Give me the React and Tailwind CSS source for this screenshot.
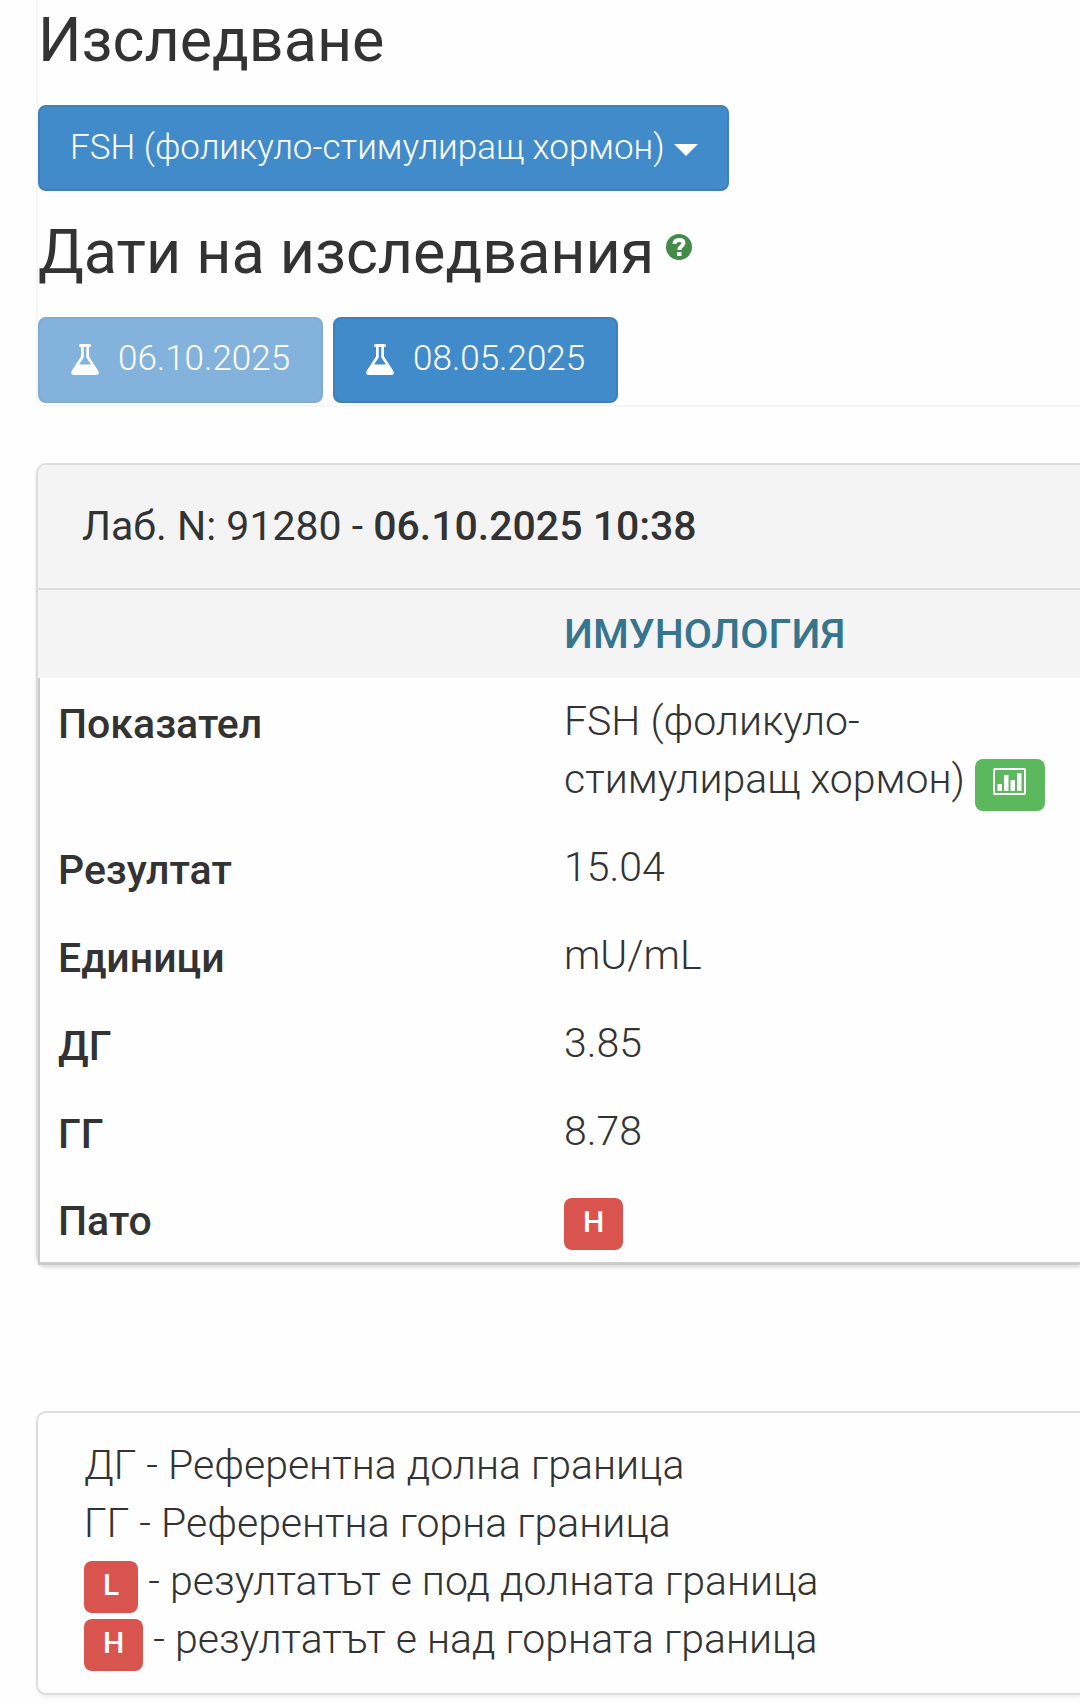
import React, { useState } from 'react';

const tests = ['FSH (фоликуло-стимулиращ хормон)'];
const dates = ['06.10.2025', '08.05.2025'];

function FlaskIcon() {
  return (
    <svg viewBox="0 0 28 31" className="h-[31px] w-[28px] shrink-0" fill="currentColor" aria-hidden="true">
      <path
        fillRule="evenodd"
        d="M9.500 0h9a1.500 1.500 0 0 1 0 3H18v9.500l9.300 14.500c1.100 2.200.2 4-2.300 4H3c-2.500 0-3.400-1.800-2.300-4L10 12.500V3h-.5a1.500 1.500 0 0 1 0-3zM12.700 3v10.500L8 20.500h12l-4.700-7V3z"
      />
    </svg>
  );
}

function HelpIcon() {
  return (
    <svg viewBox="0 0 26 26" className="h-[26px] w-[26px]" aria-hidden="true">
      <circle cx="13" cy="13" r="13" fill="#448a48" />
      <path d="M8.500 10C8.500 7 10.400 5.900 13.200 5.900s4.300 1.300 4.300 3.300c0 2.800-4.200 3-4.200 6.800" fill="none" stroke="#fff" strokeWidth="4" />
      <rect x="11" y="18" width="4.500" height="4" fill="#fff" />
    </svg>
  );
}

function StatsIcon() {
  return (
    <svg viewBox="0 0 33 27" className="h-[27px] w-[33px]" fill="#fff" aria-hidden="true">
      <rect x="1" y="1" width="31" height="25" rx="1" fill="none" stroke="#fff" strokeWidth="2" />
      <rect x="4.500" y="16" width="4.500" height="7" />
      <rect x="11" y="7" width="4.500" height="16" />
      <rect x="17.500" y="12" width="4.500" height="11" />
      <rect x="24" y="5" width="4.500" height="18" />
    </svg>
  );
}

function Flag({ children }) {
  return (
    <span className="-my-2 inline-block h-[52px] rounded-[8px] bg-[#d9534f] px-[19px] text-[30px] font-medium leading-[48px] text-white">
      {children}
    </span>
  );
}

export default function App() {
  const [test, setTest] = useState(tests[0]);
  const [active, setActive] = useState(dates[0]);

  const rows = [
    { label: 'Резултат', value: '15.04' },
    { label: 'Единици', value: 'mU/mL' },
    { label: 'ДГ', value: '3.85' },
    { label: 'ГГ', value: '8.78' },
  ];

  return (
    <div className="overflow-hidden bg-[#fefefe] pb-[9px] pl-9 font-['Roboto',sans-serif] text-[41px] font-light leading-[58px] text-[#333]">
      {/* Filters */}
      <section className="rounded-bl-[8px] border-b-2 border-l-2 border-[#f6f6f6] pb-[2px]">
        <h2 className="pt-1 text-[61px] font-normal leading-[72px]">
          <label htmlFor="test">Изследване</label>
        </h2>
        <div className="relative mt-[29px] inline-block align-top">
          <select
            id="test"
            value={test}
            onChange={(e) => setTest(e.target.value)}
            className="block h-[86px] appearance-none rounded-[8px] border-2 border-[#3f80b8] bg-[#428bca] pl-[30px] pr-[62px] text-[35px] text-white"
          >
            {tests.map((t) => (
              <option key={t}>{t}</option>
            ))}
          </select>
          <svg viewBox="0 0 24 12" className="pointer-events-none absolute right-[31px] top-[39px] h-[12px] w-[24px]" fill="#fff" aria-hidden="true">
            <path d="M0 0h24L12 12z" />
          </svg>
        </div>

        <h2 className="mt-[25px] flex gap-3 text-[61px] font-normal leading-[72px]">
          Дати на изследвания
          <button type="button" aria-label="Помощ" className="mt-[18px] h-[26px]">
            <HelpIcon />
          </button>
        </h2>
        <div className="mt-[29px] flex gap-[10px]">
          {dates.map((d) => (
            <button
              key={d}
              type="button"
              onClick={() => setActive(d)}
              className={`flex h-[86px] items-center gap-[19px] rounded-[8px] border-2 border-[#3f80b8] bg-[#428bca] px-[31px] pb-[2px] text-[35px] text-white ${
                d === active ? 'opacity-65' : ''
              }`}
            >
              <FlaskIcon />
              {d}
            </button>
          ))}
        </div>
      </section>

      {/* Results */}
      <section className="mt-[56px] rounded-l-[10px] border-l-2 border-t-2 border-[#ddd] shadow-[0_3px_3px_rgba(0,0,0,0.12)]">
        <div className="rounded-tl-[8px] border-b-2 border-[#ddd] bg-[#f4f4f4] pb-[33px] pl-[44px] pt-8 font-normal">
          Лаб. N: 91280 - <strong className="font-medium">06.10.2025 10:38</strong>
        </div>
        <table className="w-full border-separate border-spacing-0 text-left">
          <thead className="bg-[#f4f4f4]">
            <tr>
              <td className="w-[507px]" />
              <th scope="col" className="px-[19px] py-[15px] font-medium text-[#37758f]">
                ИМУНОЛОГИЯ
              </th>
            </tr>
          </thead>
          <tbody>
            <tr>
              <th scope="row" className="border-l-2 border-[#ccc] px-[18px] pb-3 pt-[17px] align-top font-medium">
                Показател
              </th>
              <td className="px-[19px] pb-[15px] pt-[14px]">
                FSH (фоликуло-стимулиращ хормон){' '}
                <button
                  type="button"
                  aria-label="Графика"
                  className="-my-2 inline-flex h-[52px] w-[70px] justify-center rounded-[8px] bg-[#5cb85c] pt-[9px] align-text-bottom"
                >
                  <StatsIcon />
                </button>
              </td>
            </tr>
            {rows.map((r) => (
              <tr key={r.label}>
                <th scope="row" className="border-l-2 border-[#ccc] px-[18px] pb-3 pt-[18px] align-top font-medium">
                  {r.label}
                </th>
                <td className="px-[19px] py-[15px]">{r.value}</td>
              </tr>
            ))}
            <tr>
              <th scope="row" className="border-b-3 border-l-2 border-[#ccc] px-[18px] pb-3 pt-[17px] align-top font-medium">
                Пато
              </th>
              <td className="border-b-3 border-[#ccc] px-[19px] pb-[15px] pt-[13px]">
                <Flag>H</Flag>
              </td>
            </tr>
          </tbody>
        </table>
      </section>

      {/* Legend */}
      <section className="mt-[146px] rounded-l-[10px] border-y-2 border-l-2 border-[#ddd] pb-[25px] pl-[46px] pt-[23px] shadow-[0_3px_3px_rgba(0,0,0,0.05)]">
        <p>ДГ - Референтна долна граница</p>
        <p>ГГ - Референтна горна граница</p>
        <p>
          <Flag>L</Flag> - резултатът е под долната граница
        </p>
        <p>
          <Flag>H</Flag> - резултатът е над горната граница
        </p>
      </section>
    </div>
  );
}
